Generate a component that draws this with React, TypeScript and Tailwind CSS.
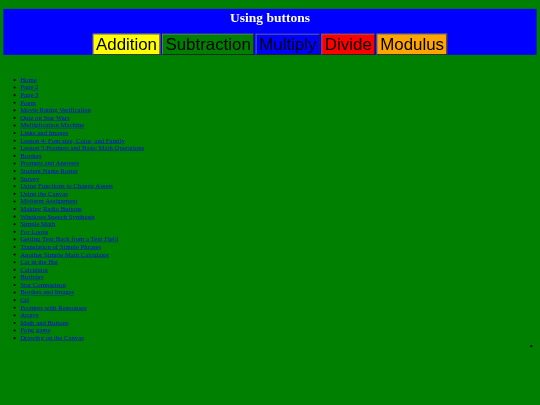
import React from 'react';

const links = [
  'Home', 'Page 2', 'Page 3', 'Poem', 'Movie Rating Verification', 'Quiz on Star Wars',
  'Multiplication Machine', 'Links and Images', 'Lesson 4: Font size, Color, and Family',
  'Lesson 5:Prompts and Basic Math Operations', 'Borders', 'Prompts and Answers',
  'Student Name Roster', 'Survey', 'Using Functions to Change Assets', 'Using the Canvas',
  'Midterm Assignment', 'Making Radio Buttons', 'Windows Speech Synthesis', 'Simple Math',
  'For Loops', 'Getting Text Back from a Text Field', 'Translation of Simple Phrases',
  'Another Simple Math Calculator', 'Cat in the Hat', 'Calculator', 'Birthday',
  'Star Comparison', 'Borders and Images', 'Gif', 'Prompts with Responses', 'Arrays',
  'Math and Buttons', 'Pong game', 'Drawing on the Canvas',
];

const buttons = [
  { label: 'Addition', cls: 'bg-[#ffff00]' },
  { label: 'Subtraction', cls: 'bg-[#008000]' },
  { label: 'Multiply', cls: 'bg-[#0000ff]' },
  { label: 'Divide', cls: 'bg-[#ff0000]' },
  { label: 'Modulus', cls: 'bg-[#ffa500]' },
];

export default function App() {
  return (
    <div className="h-[405px] w-[540px] overflow-hidden bg-[#008000]">
      {/* the page is a 1280 wide one, shrunk to fit */}
      <div className="relative h-[960px] w-[1280px] origin-top-left scale-[0.421875] px-[8px] pt-[21px] font-['Liberation_Serif',serif] text-[16px] leading-[18px] text-black">
        <div className="bg-[#0000ff] blur-[0.7px]">
          <h1 className="mb-[21px] pt-[1px] text-center text-[32px] leading-[37px] font-bold text-white">Using buttons</h1>
          <div className="flex justify-center gap-[4px]">
            {buttons.map((b) => (
              <button
                key={b.label}
                className={`h-[50px] border-2 border-[#767676] px-[6px] font-['Liberation_Sans',sans-serif] text-[40px] leading-[46px] text-black [border-style:outset] ${b.cls}`}
              >
                {b.label}
              </button>
            ))}
          </div>
        </div>
        <ul className="mt-[50px] list-disc pl-[40px] blur-[0.7px]">
          {links.map((l) => (
            <li key={l}>
              <a href="#" className="text-[#0000ee] underline">{l}</a>
            </li>
          ))}
        </ul>
        <div className="absolute top-[818px] left-[1257px] h-[5px] w-[5px] rounded-full bg-black" />
      </div>
    </div>
  );
}
